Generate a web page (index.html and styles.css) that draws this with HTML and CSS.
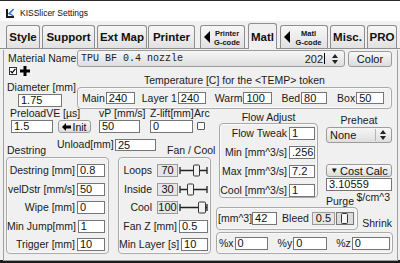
FILE: index.html
```html
<!DOCTYPE html>
<html lang="en">
<head>
    <meta charset="UTF-8">
    <meta name="viewport" content="width=device-width, initial-scale=1.0">
    <title>KISSlicer Settings</title>
    <link rel="stylesheet" href="styles.css">
</head>
<body>
<div class="window">

    <!-- Title bar -->
    <div class="titlebar">
        <svg class="app-icon" width="10" height="10" viewBox="0 0 10 10">
            <path d="M1 1h2v7h6v2H1z" fill="#1b1b1b"/>
            <path d="M3.6 6.2 8.6 1" stroke="#2f6fd6" stroke-width="1.6"/>
            <path d="M4.4 5.4 8.4 8" stroke="#2f6fd6" stroke-width="1.4"/>
        </svg>
        <span class="title">KISSlicer Settings</span>
    </div>

    <!-- Tabs -->
    <div class="tabs">
        <div class="tab tab-style">Style</div>
        <div class="tab tab-support">Support</div>
        <div class="tab tab-extmap">Ext Map</div>
        <div class="tab tab-printer">Printer</div>
        <div class="tab tab-pgcode"><span class="tri"></span><span class="two-line">Printer<br>G-code</span></div>
        <div class="tab tab-matl active">Matl</div>
        <div class="tab tab-mgcode"><span class="tri"></span><span class="two-line">Matl<br>G-code</span></div>
        <div class="tab tab-misc">Misc.</div>
        <div class="tab tab-pro">PRO</div>
    </div>

    <div class="panel">

        <!-- Material name -->
        <div class="row-material">
            <span class="lbl mat-label">Material Name</span>
            <div class="combo mat-combo">
                <span class="mono">TPU BF 0.4 nozzle</span>
                <span class="combo-val">202</span><span class="caret"></span>
                <svg class="spin" width="6" height="10" viewBox="0 0 6 10"><path d="M0 4 3 0 6 4zM0 6 3 10 6 6z" fill="#222"/></svg>
            </div>
            <div class="btn btn-color">Color</div>
        </div>

        <!-- Diameter + temperature -->
        <div class="row-mid">
            <div class="col-diam">
                <div class="flags">
                    <svg width="8" height="8" viewBox="0 0 8 8"><rect x=".5" y=".5" width="7" height="7" fill="#fff" stroke="#333"/><path d="M1.6 4 3.2 5.9 6.4 1.8" fill="none" stroke="#000" stroke-width="1.2"/></svg>
                    <svg class="plus" width="10" height="10" viewBox="0 0 10 10"><path d="M3.5 0h3v3.5H10v3H6.5V10h-3V6.5H0v-3h3.5z" fill="#000"/></svg>
                </div>
                <div class="lbl diam-label">Diameter [mm]</div>
                <span class="field diam-field">1.75</span>
            </div>
            <div class="col-temp">
                <div class="lbl temp-title">Temperature [C] for the &lt;TEMP&gt; token</div>
                <div class="group temp-group">
                    <span class="lbl">Main</span><span class="field w29">240</span>
                    <span class="lbl ml7">Layer 1</span><span class="field w28">240</span>
                    <span class="lbl ml9">Warm</span><span class="field w29">100</span>
                    <span class="lbl ml9">Bed</span><span class="field w26">80</span>
                    <span class="lbl ml10">Box</span><span class="field w28">50</span>
                </div>
            </div>
        </div>

        <div class="row-lower">
            <div class="col-a">
                <div class="top-fields">
                    <div class="fg fg-preload">
                        <span class="lbl">PreloadVE [µs]</span>
                        <div class="fg-line">
                            <span class="field preload-field">1.5</span>
                            <div class="btn btn-init">
                                <svg width="9" height="8" viewBox="0 0 9 8"><path d="M0 4 4 0v2.5h5v3H4V8z" fill="#000"/></svg>Init
                            </div>
                        </div>
                    </div>
                    <div class="fg fg-vp">
                        <span class="lbl">vP [mm/s]</span>
                        <span class="field">50</span>
                    </div>
                    <div class="fg fg-z">
                        <span class="lbl">Z-lift[mm]</span>
                        <span class="field">0</span>
                    </div>
                    <div class="fg fg-arc">
                        <span class="lbl">Arc</span>
                        <span class="checkbox"></span>
                    </div>
                </div>

                <div class="unload-row">
                    <span class="lbl unload-label">Unload[mm]</span>
                    <span class="field unload-field">25</span>
                </div>

                <div class="box-titles">
                    <span class="lbl destring-title">Destring</span>
                    <span class="lbl">Fan / Cool</span>
                </div>

                <div class="boxes">
                    <div class="group destring-group">
                        <div class="frow"><span class="lbl">Destring [mm]</span><span class="field w28">0.8</span></div>
                        <div class="frow"><span class="lbl">velDstr [mm/s]</span><span class="field w28">50</span></div>
                        <div class="frow"><span class="lbl">Wipe [mm]</span><span class="field w28">0</span></div>
                        <div class="frow"><span class="lbl">Min Jump[mm]</span><span class="field w28">1</span></div>
                        <div class="frow"><span class="lbl">Trigger [mm]</span><span class="field w28">10</span></div>
                    </div>
                    <div class="group fan-group">
                        <div class="frow">
                            <span class="lbl">Loops</span><span class="num">70</span>
                            <svg class="slider" width="29" height="13" viewBox="0 0 29 13"><path d="M1 3v7M28 3v7M1 6.5h27" stroke="#222" stroke-width="1.3"/><rect x="14.5" y="1" width="6" height="11" rx="1" fill="#f2f2f2" stroke="#333"/></svg>
                        </div>
                        <div class="frow">
                            <span class="lbl">Inside</span><span class="num">30</span>
                            <svg class="slider" width="29" height="13" viewBox="0 0 29 13"><path d="M1 3v7M28 3v7M1 6.5h27" stroke="#222" stroke-width="1.3"/><rect x="8.5" y="1" width="6" height="11" rx="1" fill="#f2f2f2" stroke="#333"/></svg>
                        </div>
                        <div class="frow">
                            <span class="lbl">Cool</span><span class="num">100</span>
                            <svg class="slider" width="29" height="13" viewBox="0 0 29 13"><path d="M1 3v7M28 3v7M1 6.5h27" stroke="#222" stroke-width="1.3"/><rect x="19.5" y="1" width="7" height="11" rx="1" fill="#f2f2f2" stroke="#333"/></svg>
                        </div>
                        <div class="frow"><span class="lbl">Fan Z [mm]</span><span class="field w29">0.5</span></div>
                        <div class="frow"><span class="lbl">Min Layer [s]</span><span class="field w29">10</span></div>
                    </div>
                </div>
            </div>

            <div class="col-b">
                <div class="b-top">
                    <div class="flow-col">
                        <div class="lbl sec-title">Flow Adjust</div>
                        <div class="group flow-group">
                            <div class="frow"><span class="lbl">Flow Tweak</span><span class="field w26">1</span></div>
                            <div class="frow"><span class="lbl">Min [mm^3/s]</span><span class="field w26">.256</span></div>
                            <div class="frow"><span class="lbl">Max [mm^3/s]</span><span class="field w26">7.2</span></div>
                            <div class="frow"><span class="lbl">Cool [mm^3/s]</span><span class="field w26">1</span></div>
                        </div>
                    </div>
                    <div class="side-col">
                        <div class="lbl preheat-title">Preheat</div>
                        <div class="combo preheat-combo">
                            <span class="combo-text">None</span>
                            <span class="combo-sep"></span>
                            <svg class="spin" width="6" height="10" viewBox="0 0 6 10"><path d="M0 4 3 0 6 4zM0 6 3 10 6 6z" fill="#222"/></svg>
                        </div>
                        <div class="btn btn-cost"><span class="down">▼</span>Cost Calc</div>
                        <span class="field cost-field">3.10559</span>
                        <div class="unit-row">
                            <span class="lbl purge-title">Purge</span>
                            <span class="lbl unit">$/cm^3</span>
                        </div>
                    </div>
                </div>

                <div class="purge-row">
                    <div class="group purge-group">
                        <span class="lbl">[mm^3]</span><span class="field purge-field">42</span>
                        <span class="lbl bleed-label">Bleed</span><span class="num bleed-num">0.5</span>
                        <svg class="mini-slider" width="18" height="13" viewBox="0 0 18 13"><rect x=".5" y=".5" width="17" height="12" fill="#dcdcdc" stroke="#777"/><rect x="5.5" y="1.5" width="6" height="10" rx="1" fill="#f6f6f6" stroke="#333"/></svg>
                    </div>
                    <span class="lbl shrink-title">Shrink</span>
                </div>

                <div class="group shrink-group">
                    <span class="lbl">%x</span><span class="field w33">0</span>
                    <span class="lbl ml10">%y</span><span class="field w34">0</span>
                    <span class="lbl ml9">%z</span><span class="field w38">0</span>
                </div>
            </div>
        </div>

    </div>
</div>
</body>
</html>
```

FILE: styles.css
```css
* {
    box-sizing: border-box;
}

body {
    margin: 0;
    width: 400px;
    height: 263px;
    overflow: hidden;
    background-color: #1c1c1c;
    font-family: "Liberation Sans", Arial, sans-serif;
    color: #151515;
}

.window {
    height: 260px;
    background-color: #f0f0f0;
    border-top: 1px solid #2a2a2a;
}

/* title bar */
.titlebar {
    height: 20px;
    background-color: #fff;
    display: flex;
    align-items: center;
    padding: 3px 0 0 5px;
}

.app-icon {
    display: block;
}

.title {
    margin-left: 5px;
    font-size: 8.5px;
    color: #111;
}

/* tabs */
.tabs {
    height: 28px;
    display: flex;
    align-items: flex-end;
    padding-left: 6px;
    background: linear-gradient(to top, #8e8e8e 1px, transparent 1px);
}

.tab {
    height: 23px;
    margin-bottom: 1px;
    border: 1px solid #8e8e8e;
    border-bottom: none;
    border-radius: 3px 3px 0 0;
    background: linear-gradient(#f7f7f7, #e1e1e1);
    display: flex;
    align-items: center;
    justify-content: center;
    font-size: 11.5px;
    font-weight: bold;
    color: #111;
}

.tab.active {
    height: 26px;
    margin-bottom: 0;
    background: #f0f0f0;
}

.tab-style { width: 34px; margin-right: 2px; }
.tab-support { width: 53px; margin-right: 2px; }
.tab-extmap { width: 50px; margin-right: 1px; }
.tab-printer { width: 47px; margin-right: 5px; }
.tab-pgcode { width: 45px; margin-right: 3px; }
.tab-matl { width: 29px; margin-right: 3px; }
.tab-mgcode { width: 48px; margin-right: 2px; }
.tab-misc { width: 35px; margin-right: 2px; }
.tab-pro { width: 30px; }

.tab-pgcode, .tab-mgcode {
    justify-content: flex-start;
    padding-left: 3px;
}

.tri {
    width: 0;
    height: 0;
    border-top: 6px solid transparent;
    border-bottom: 6px solid transparent;
    border-right: 6px solid #000;
}

.two-line {
    flex: 1;
    text-align: center;
    font-size: 7.5px;
    line-height: 9px;
    padding-top: 1px;
}

/* main panel */
.panel {
    height: 211px;
    margin: 0 2px 0 3px;
    border: 1px solid #a0a0a0;
    border-top: none;
}

.lbl {
    font-size: 10.5px;
    line-height: 11px;
    white-space: nowrap;
    color: #1a1a1a;
}

.field {
    display: block;
    height: 13px;
    border: 1px solid #767676;
    background-color: #fff;
    font-size: 11px;
    line-height: 11px;
    padding-left: 2px;
    color: #111;
    white-space: nowrap;
    overflow: hidden;
}

.num {
    display: block;
    height: 13px;
    border: 1px solid #9a9a9a;
    background-color: #e6e6e6;
    font-size: 11px;
    line-height: 11px;
    text-align: center;
    color: #111;
}

.group {
    border: 1px solid #a9a9a9;
    border-radius: 4px;
    box-shadow: inset 0 0 0 1px #fafafa;
}

.btn {
    display: flex;
    align-items: center;
    justify-content: center;
    border: 1px solid #9a9a9a;
    border-radius: 3px;
    background: linear-gradient(#f8f8f8, #dcdcdc);
    font-size: 11px;
    color: #111;
}

.combo {
    display: flex;
    align-items: center;
    border: 1px solid #9c9c9c;
    border-radius: 3px;
    background: linear-gradient(#f6f6f6, #dedede);
}

.spin {
    display: block;
}

.w26 { width: 26px; }
.w28 { width: 28px; }
.w29 { width: 29px; }
.w33 { width: 33px; }
.w34 { width: 34px; }
.w38 { width: 38px; }
.ml7 { margin-left: 7px; }
.ml9 { margin-left: 9px; }
.ml10 { margin-left: 10px; }

/* material row */
.row-material {
    display: flex;
    height: 17px;
    margin-top: 1px;
    align-items: center;
    padding-left: 4px;
}

.mat-label {
    width: 69px;
}

.mat-combo {
    width: 268px;
    height: 17px;
    padding: 0 6px 0 3px;
}

.mono {
    flex: 1;
    font-family: "Liberation Mono", "Courier New", monospace;
    font-size: 10px;
    color: #222;
}

.combo-val {
    font-size: 11px;
    color: #222;
}

.caret {
    width: 1px;
    height: 11px;
    margin: 0 7px 0 1px;
    background-color: #000;
}

.btn-color {
    width: 44px;
    height: 16px;
    margin-left: 3px;
}

/* diameter + temperature */
.row-mid {
    display: flex;
    height: 42px;
}

.col-diam {
    width: 73px;
}

.flags {
    display: flex;
    align-items: center;
    height: 10px;
    margin: -1px 0 0 5px;
}

.flags svg {
    display: block;
}

.plus {
    margin-left: 3px;
}

.diam-label {
    margin: 6px 0 0 3px;
}

.diam-field {
    width: 44px;
    margin: 1px 0 0 14px;
}

.col-temp {
    width: 316px;
}

.temp-title {
    margin-top: 8px;
    text-align: center;
    padding-right: 1px;
}

.temp-group {
    width: 315px;
    height: 22px;
    margin-top: 1px;
    display: flex;
    align-items: center;
    padding-left: 4px;
}

.temp-group .lbl {
    margin-right: 1px;
}

.temp-group .field {
    height: 12px;
    line-height: 10px;
}

/* lower area */
.row-lower {
    display: flex;
}

.col-a {
    width: 212px;
}

.top-fields {
    display: flex;
    margin: -1px 0 0 6px;
}

.fg {
    display: flex;
    flex-direction: column;
}

.fg .field {
    margin-top: 1px;
}

.fg-preload { width: 81px; }
.fg-vp { width: 41px; margin-left: 8px; }
.fg-z { width: 43px; margin-left: 10px; }
.fg-arc { margin-left: 1px; }

.fg-line {
    display: flex;
    margin-top: 1px;
}

.fg-line .field {
    margin-top: 0;
}

.preload-field {
    width: 42px;
    margin-left: 1px;
}

.btn-init {
    width: 33px;
    height: 13px;
    margin-left: 5px;
    font-size: 10.5px;
}

.btn-init svg {
    margin-right: 1px;
}

.checkbox {
    width: 8px;
    height: 8px;
    margin: 3px 0 0 3px;
    border: 1px solid #555;
    border-radius: 1px;
    background-color: #fff;
}

.unload-row {
    display: flex;
    align-items: center;
    height: 13px;
    margin: 5px 0 0 53px;
}

.unload-label {
    width: 56px;
}

.unload-field {
    width: 41px;
    height: 12px;
    margin-left: 2px;
}

.box-titles {
    display: flex;
    margin-top: -6px;
}

.destring-title {
    width: 160px;
    margin-left: 3px;
}

.boxes {
    display: flex;
    margin-top: 1px;
}

.destring-group, .fan-group {
    height: 97px;
    padding-top: 6px;
    display: flex;
    flex-direction: column;
    gap: 5.5px;
}

.destring-group {
    width: 103px;
    margin-left: 2px;
    padding-right: 3px;
}

.fan-group {
    width: 93px;
    margin-left: 9px;
    padding-right: 2px;
}

.frow {
    display: flex;
    align-items: center;
    justify-content: flex-end;
    height: 13px;
}

.frow .lbl {
    margin-right: 2px;
}

.fan-group .num {
    width: 21px;
    margin-left: 3px;
}

.slider {
    display: block;
    margin-left: 1px;
}

/* right part */
.col-b {
    width: 177px;
}

.b-top {
    display: flex;
    height: 97px;
}

.flow-col {
    width: 99px;
    margin-left: 3px;
}

.sec-title {
    margin-top: 3px;
    text-align: center;
}

.flow-group {
    height: 75px;
    padding: 3px 2px 0 0;
    display: flex;
    flex-direction: column;
    gap: 6px;
}

.side-col {
    width: 66px;
    margin-left: 8px;
    display: flex;
    flex-direction: column;
}

.preheat-title {
    margin-top: 6px;
    text-align: center;
}

.preheat-combo {
    height: 16px;
    margin-top: 1px;
    padding: 0 5px 0 3px;
}

.combo-text {
    flex: 1;
    font-size: 11px;
}

.combo-sep {
    width: 1px;
    height: 12px;
    margin-right: 4px;
    background-color: #b5b5b5;
}

.btn-cost {
    height: 13px;
    margin-top: 21px;
    font-size: 11px;
}

.down {
    font-size: 8px;
    margin-right: 2px;
}

.cost-field {
    height: 13px;
    margin-top: 1px;
}

.unit-row {
    display: flex;
    justify-content: space-between;
    height: 15px;
}

.purge-title {
    align-self: flex-end;
    margin-bottom: -1px;
}

.unit {
    margin: 1px 2px 0 0;
}

.purge-row {
    display: flex;
    align-items: flex-end;
    margin-top: 1px;
}

.purge-group {
    width: 142px;
    height: 23px;
    display: flex;
    align-items: center;
    padding-left: 1px;
}

.purge-field {
    width: 25px;
    margin-left: 0;
}

.bleed-label {
    margin-left: 5px;
}

.bleed-num {
    width: 23px;
    margin-left: 3px;
}

.mini-slider {
    display: block;
    margin-left: 1px;
}

.shrink-title {
    margin: 0 1px 1px auto;
}

.shrink-group {
    width: 177px;
    height: 22px;
    margin-top: 2px;
    display: flex;
    align-items: center;
    padding-left: 2px;
}

.shrink-group .lbl {
    margin-right: 1px;
}
```
